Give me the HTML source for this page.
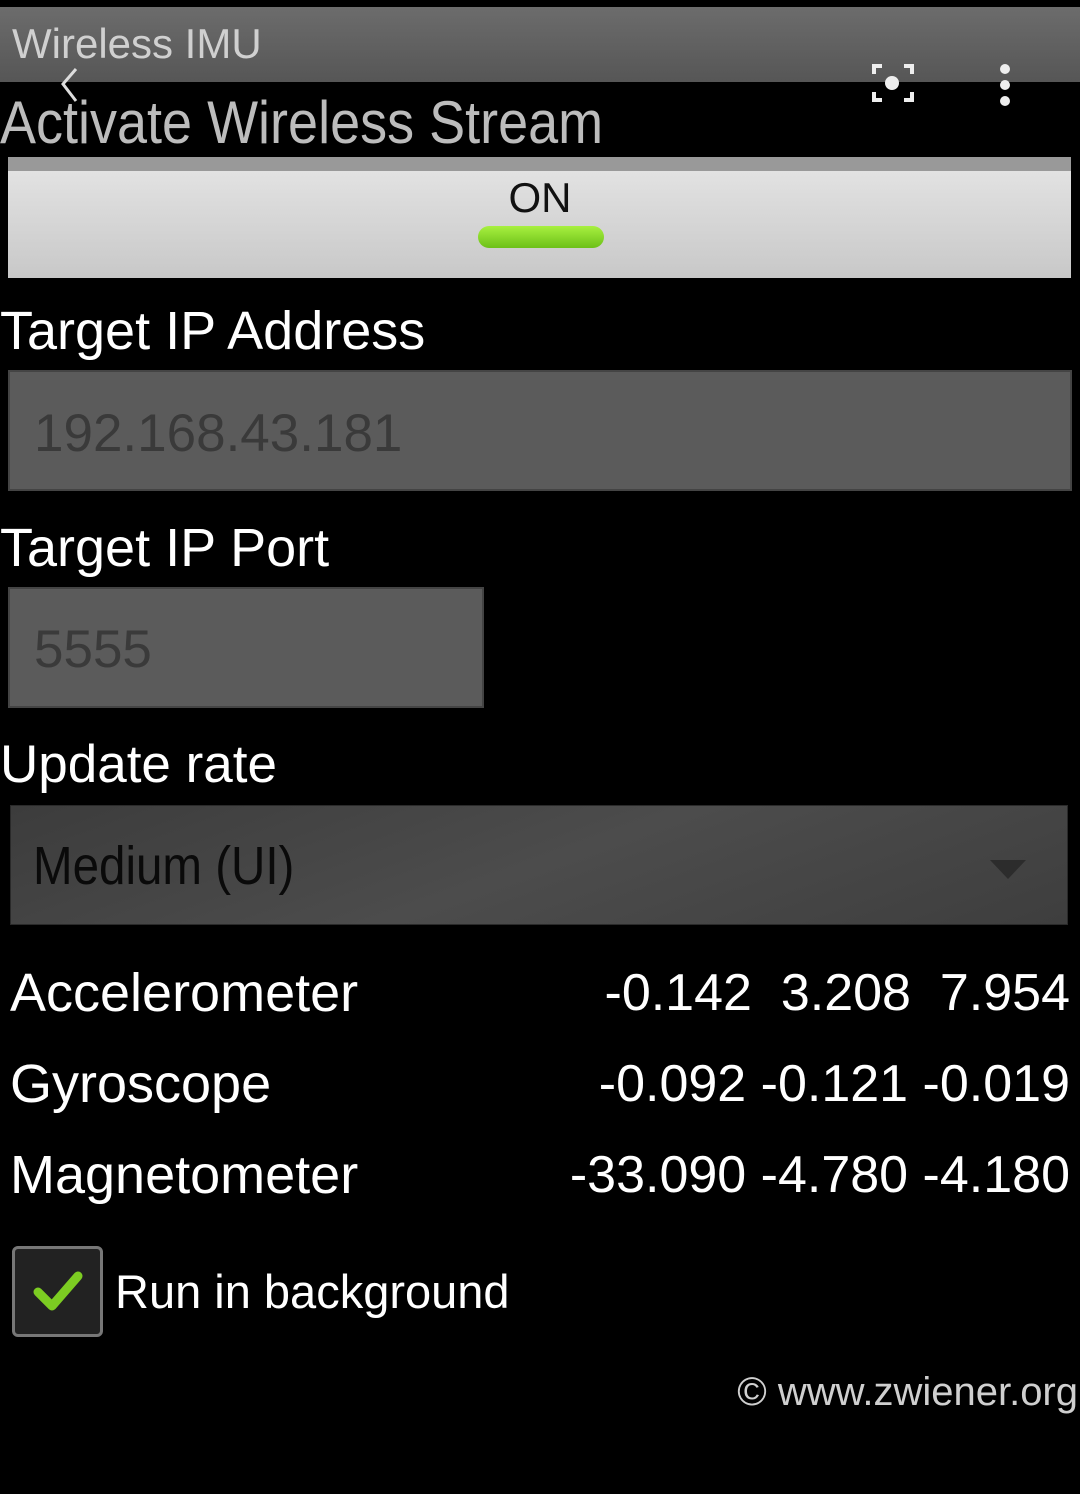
<!DOCTYPE html>
<html><head><meta charset="utf-8"><style>
body{margin:0;width:1080px;height:1494px;background:#000;position:relative;overflow:hidden;font-family:"Liberation Sans",sans-serif;color:#fff}
.a{position:absolute;white-space:nowrap}
.n{transform-origin:0 0}
</style></head><body>
<div class="a" style="left:0;top:7px;width:1080px;height:75px;background:linear-gradient(#6c6c6c,#565656)"></div>
<div class="a" style="left:12px;top:19px;font-size:42px;color:#d0d0d0;line-height:50px">Wireless IMU</div>
<svg class="a" style="left:55px;top:66px" width="30" height="40"><path d="M21 3 L8 18 L21 35" stroke="#ddd" stroke-width="3" fill="none"/></svg>
<svg class="a" style="left:870px;top:60px" width="46" height="46"><path d="M4 14V6h8M34 6h8v8M42 32v8h-8M12 40H4v-8" stroke="#eee" stroke-width="4" fill="none"/><circle cx="22" cy="23" r="7" fill="#eee"/></svg>
<svg class="a" style="left:995px;top:62px" width="20" height="46"><circle cx="10" cy="7" r="5" fill="#eee"/><circle cx="10" cy="23" r="5" fill="#eee"/><circle cx="10" cy="39" r="5" fill="#eee"/></svg>
<div class="a n" style="left:0;top:90px;font-size:60px;color:#bcbcbc;line-height:66px;transform:scaleX(0.9)">Activate Wireless Stream</div>
<div class="a" style="left:8px;top:157px;width:1063px;height:121px;background:linear-gradient(#e2e2e2,#c8c8c8);border-top:14px solid #999;box-sizing:border-box"></div>
<div class="a" style="left:0;width:1080px;text-align:center;top:174px;font-size:42px;color:#111;line-height:48px">ON</div>
<div class="a" style="left:478px;top:226px;width:126px;height:22px;border-radius:11px;background:linear-gradient(#a8f040,#6cc018)"></div>
<div class="a" style="left:0;top:300px;font-size:54px;line-height:62px">Target IP Address</div>
<div class="a" style="left:8px;top:370px;width:1064px;height:121px;background:#5b5b5b;border:2px solid #444;box-sizing:border-box"></div>
<div class="a" style="left:34px;top:403px;font-size:53px;color:#3a3a3a;line-height:62px">192.168.43.181</div>
<div class="a" style="left:0;top:517px;font-size:54px;line-height:62px">Target IP Port</div>
<div class="a" style="left:8px;top:587px;width:476px;height:121px;background:#5b5b5b;border:2px solid #444;box-sizing:border-box"></div>
<div class="a" style="left:34px;top:619px;font-size:53px;color:#3a3a3a;line-height:62px">5555</div>
<div class="a" style="left:0;top:734px;font-size:53px;line-height:62px">Update rate</div>
<div class="a" style="left:10px;top:805px;width:1058px;height:120px;background:linear-gradient(160deg,#3c3c3c,#4c4c4c 50%,#3e3e3e);border:1px solid #2a2a2a;box-sizing:border-box"></div>
<div class="a n" style="left:33px;top:834px;font-size:54px;color:#0a0a0a;line-height:64px;transform:scaleX(0.88)">Medium (UI)</div>
<svg class="a" style="left:990px;top:860px" width="36" height="20"><path d="M0 0H36L18 19Z" fill="#2c2c2c"/></svg>
<div class="a" style="left:10px;top:962px;font-size:54px;line-height:62px">Accelerometer</div>
<div class="a" style="right:10px;top:962px;font-size:52px;line-height:62px">-0.142&nbsp; 3.208&nbsp; 7.954</div>
<div class="a" style="left:10px;top:1053px;font-size:54px;line-height:62px">Gyroscope</div>
<div class="a" style="right:10px;top:1053px;font-size:52px;line-height:62px">-0.092 -0.121 -0.019</div>
<div class="a" style="left:10px;top:1144px;font-size:54px;line-height:62px">Magnetometer</div>
<div class="a" style="right:10px;top:1144px;font-size:52px;line-height:62px">-33.090 -4.780 -4.180</div>
<div class="a" style="left:12px;top:1246px;width:91px;height:91px;border:3px solid #777;border-radius:6px;background:#222;box-sizing:border-box"></div>
<svg class="a" style="left:28px;top:1262px" width="60" height="60"><path d="M10 30 L24 44 L50 14" stroke="#7ccc22" stroke-width="9" fill="none" stroke-linecap="round" stroke-linejoin="round"/></svg>
<div class="a" style="left:115px;top:1263px;font-size:47px;line-height:58px">Run in background</div>
<div class="a" style="right:2px;top:1369px;font-size:40px;color:#cfcfcf;line-height:46px">© www.zwiener.org</div>
</body></html>
